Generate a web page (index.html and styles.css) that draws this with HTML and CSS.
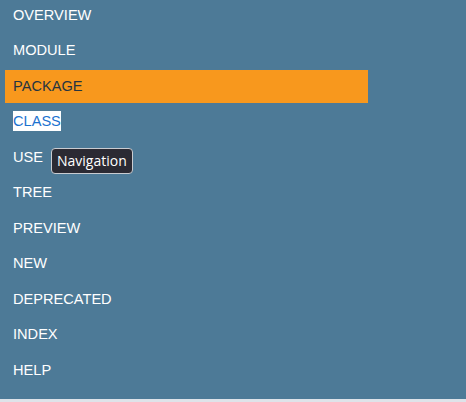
FILE: index.html
```html
<!DOCTYPE html>
<html>
<head>
<meta charset="utf-8">
<link rel="stylesheet" href="styles.css">
</head>
<body>
<div class="panel">
  <ul class="nav">
    <li><a class="link">OVERVIEW</a></li>
    <li><a class="link">MODULE</a></li>
    <li><a class="link active">PACKAGE</a></li>
    <li><a class="link"><span class="selected">CLASS</span></a></li>
    <li class="has-tip"><a class="link">USE</a><span class="tip">Navigation</span></li>
    <li><a class="link">TREE</a></li>
    <li><a class="link">PREVIEW</a></li>
    <li><a class="link">NEW</a></li>
    <li><a class="link">DEPRECATED</a></li>
    <li><a class="link">INDEX</a></li>
    <li><a class="link">HELP</a></li>
  </ul>
</div>
<div class="strip"></div>
</body>
</html>
```
FILE: styles.css
```css
html, body {
  margin: 0;
  padding: 0;
  background: #dee3e9;
  overflow: hidden;
}
body {
  width: 466px;
  height: 402px;
  font-family: "Liberation Sans", Arial, sans-serif;
}
.panel {
  background: #4d7a97;
  height: 399px;
  overflow: hidden;
}
.nav {
  list-style: none;
  margin: -1.5px 0 0 0;
  padding: 0 0 0 5px;
  width: 363px;
}
.nav li {
  height: 35.5px;
  position: relative;
}
.link {
  display: block;
  height: 33px;
  line-height: 32px;
  padding-left: 8px;
  color: #ffffff;
  font-size: 14.6px;
  box-sizing: border-box;
  white-space: nowrap;
}
.link.active {
  background: #f8981d;
  color: #253441;
}
.selected {
  background: #ffffff;
  color: #1b72cf;
  padding: 2px 0 2px 0;
}
.tip {
  position: absolute;
  left: 46px;
  top: 7px;
  height: 26px;
  box-sizing: border-box;
  padding: 0 5px;
  line-height: 24px;
  background: #2b2a33;
  color: #ffffff;
  border: 1px solid #c9ccd1;
  border-radius: 4px;
  font-family: "Open Sans", sans-serif;
  font-size: 14px;
  white-space: nowrap;
}
.strip {
  height: 3px;
  background: #dee3e9;
}
```
